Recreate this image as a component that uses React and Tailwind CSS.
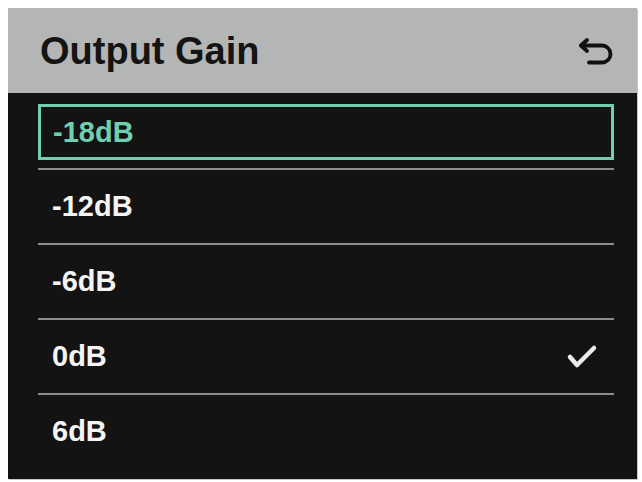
import React from "react";

const options = ["-18dB", "-12dB", "-6dB", "0dB", "6dB"];

function BackIcon() {
  return (
    <svg width="38" height="30" viewBox="0 0 38 30" fill="none" stroke="#111" strokeWidth="3.8" strokeLinecap="round" strokeLinejoin="round">
      <path d="M10 4 4 9.5l6 5.5" />
      <path d="M4 9.5h21a8.5 8.5 0 0 1 0 17H12" />
    </svg>
  );
}

function Check() {
  return (
    <svg width="32" height="26" viewBox="0 0 32 26" fill="none" stroke="#ececec" strokeWidth="4.5" strokeLinecap="round" strokeLinejoin="round">
      <path d="M4 13l7 8L28 4" />
    </svg>
  );
}

export default function App() {
  const selected = 0;
  const checked = 3;

  return (
    <div className="w-[642px] h-[482px] bg-white pt-[8px] pl-[8px]" style={{ fontFamily: '"Liberation Sans", Arial, sans-serif' }}>
      <div className="w-[629px] h-[471px] bg-[#131313] flex flex-col shadow-[1px_1px_0_#c8c8c8]">
        <div className="h-[85px] bg-[#b4b5b5] flex items-center justify-between pl-[32px] pr-[22px] shrink-0">
          <h1 className="text-[38px] font-bold text-[#141414] leading-none">Output Gain</h1>
          <BackIcon />
        </div>

        <div className="flex flex-col pt-[11px] pl-[30px] pr-[23px]">
          {options.map((opt, i) => (
            <React.Fragment key={opt}>
              {i > 0 && <div className={"h-[2px] bg-[#8c8c8c] " + (i === 1 ? "mt-[8px]" : "")} />}
              {i === selected ? (
                <div className="h-[56px] border-[3px] border-[#6fcfb0] flex items-center pl-[12px]">
                  <span className="text-[29px] font-bold text-[#6fcfb0] leading-none">{opt}</span>
                </div>
              ) : (
                <div className="h-[73px] flex items-center justify-between pl-[14px] pr-[16px]">
                  <span className="text-[29px] font-bold text-[#f4f4f4] leading-none">{opt}</span>
                  {i === checked && <Check />}
                </div>
              )}
            </React.Fragment>
          ))}
        </div>
      </div>
    </div>
  );
}
